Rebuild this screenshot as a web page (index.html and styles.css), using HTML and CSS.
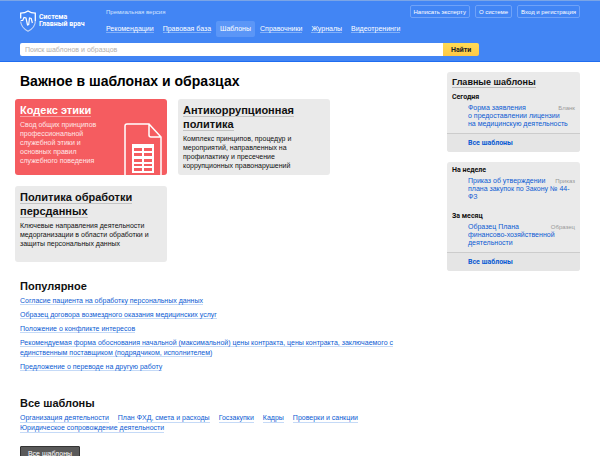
FILE: index.html
```html
<!DOCTYPE html>
<html lang="ru">
<head>
  <meta charset="UTF-8">
  <title>Шаблоны — Система Главный врач</title>
  <link rel="stylesheet" href="styles.css">
</head>
<body>
  <header class="header">
    <div class="header-top">
      <a class="logo" href="#">
        <svg width="16" height="22" viewBox="0 0 16 22" fill="none" stroke="#fff">
          <path d="M.7 8.500V3.200C3.500 3.200 6 2.500 8 1c2 1.500 4.500 2.200 7.300 2.200v8" stroke-width="1.300"/>
          <path d="M.7 11.500c.2 4.500 3.300 7.500 7.300 9.700 4.200-2.200 7.300-5.400 7.300-10" stroke-width="1.100" stroke="#c3d5f5"/>
          <path d="M.7 10.500h2L4 7.500l2 .5 1.500 7 1.200-.5L9.500 8l1.700.5 1.200 4.500" stroke-width="1.200"/>
        </svg>
        <span>Система<br>Главный врач</span>
      </a>
      <div class="header-middle">
        <div class="version">Премиальная версия</div>
        <nav class="nav">
          <a href="#"><span>Рекомендации</span></a>
          <a href="#"><span>Правовая база</span></a>
          <a class="active" href="#"><span>Шаблоны</span></a>
          <a href="#"><span>Справочники</span></a>
          <a href="#"><span>Журналы</span></a>
          <a href="#"><span>Видеотренинги</span></a>
        </nav>
      </div>
      <div class="user-buttons">
        <button type="button">Написать эксперту</button>
        <button type="button">О системе</button>
        <button type="button">Вход и регистрация</button>
      </div>
    </div>
    <form class="search">
      <input type="text" aria-label="Поиск" placeholder="Поиск шаблонов и образцов">
      <button type="button">Найти</button>
    </form>
  </header>

  <div class="page">
    <main class="content">
      <h1>Важное в шаблонах и образцах</h1>
      <div class="cards">
        <section class="card card-red">
          <h2><a href="#">Кодекс этики</a></h2>
          <p>Свод общих принципов профессиональной служебной этики и основных правил служебного поведения</p>
          <svg class="doc" width="40" height="52" viewBox="0 0 40 52" fill="none" stroke="#fff" stroke-width="1.500">
            <path d="M2 52V3q0-2 2-2h22l12 13v38M26 1v11q0 2 2 2h10"/>
            <path d="M9 21h22v29H9z" fill="#fff" stroke="none"/>
            <path d="M11 25h8v3h-8zM21 25h8v3h-8zM11 30h8v3h-8zM21 30h8v3h-8zM11 36h8v3h-8zM21 36h8v3h-8zM11 41h8v2h-8zM21 41h8v2h-8zM11 45h8v3h-8zM21 45h8v3h-8z" fill="#f55c60" stroke="none"/>
          </svg>
        </section>
        <section class="card">
          <h2><a href="#">Антикоррупционная политика</a></h2>
          <p>Комплекс принципов, процедур и мероприятий, направленных на профилактику и пресечение коррупционных правонарушений</p>
        </section>
        <section class="card">
          <h2><a href="#">Политика обработки персданных</a></h2>
          <p>Ключевые направления деятельности медорганизации в области обработки и защиты персональных данных</p>
        </section>
      </div>

      <h2 class="title">Популярное</h2>
      <ul class="popular">
        <li><a href="#">Согласие пациента на обработку персональных данных</a></li>
        <li><a href="#">Образец договора возмездного оказания медицинских услуг</a></li>
        <li><a href="#">Положение о конфликте интересов</a></li>
        <li><a href="#">Рекомендуемая форма обоснования начальной (максимальной) цены контракта, цены контракта, заключаемого с единственным поставщиком (подрядчиком, исполнителем)</a></li>
        <li><a href="#">Предложение о переводе на другую работу</a></li>
      </ul>

      <h2 class="title">Все шаблоны</h2>
      <div class="topics">
        <a href="#">Организация деятельности</a>
        <a href="#">План ФХД, смета и расходы</a>
        <a href="#">Госзакупки</a>
        <a href="#">Кадры</a>
        <a href="#">Проверки и санкции</a>
        <a href="#">Юридическое сопровождение деятельности</a>
      </div>
      <button class="all-button" type="button">Все шаблоны</button>
    </main>

    <aside class="sidebar">
      <section class="box">
        <h2><a href="#">Главные шаблоны</a></h2>
        <h3>Сегодня</h3>
        <div class="item">
          <a href="#">Форма заявления <br>о предоставлении лицензии <br>на медицинскую деятельность</a>
          <span>Бланк</span>
        </div>
        <a class="more" href="#">Все шаблоны</a>
      </section>
      <section class="box">
        <h3>На неделе</h3>
        <div class="item item-spaced">
          <a href="#">Приказ об утверждении <br>плана закупок по Закону № 44-<br>ФЗ</a>
          <span>Приказ</span>
        </div>
        <h3>За месяц</h3>
        <div class="item">
          <a href="#">Образец Плана <br>финансово-хозяйственной деятельности</a>
          <span>Образец</span>
        </div>
        <a class="more" href="#">Все шаблоны</a>
      </section>
    </aside>
  </div>
</body>
</html>
```
FILE: styles.css
```css
* {
  box-sizing: border-box;
}

body {
  margin: 0;
  background: #fff;
  color: #111;
  font-family: "Liberation Sans", Arial, sans-serif;
  font-size: 7px;
  line-height: 9px;
}

h1, h2, h3, p, ul {
  margin: 0;
  padding: 0;
}

a {
  color: #0b5bd3;
  text-decoration: none;
}

button, input {
  font-family: inherit;
  border: none;
  margin: 0;
}

.header {
  padding: 4px 20px 5px;
  background: #4285f4;
  border-top: 1px solid #7ba5e6;
  border-bottom: 1px solid #1f6df0;
}

.header-top {
  display: flex;
  align-items: flex-start;
  height: 38px;
}

.logo {
  display: flex;
  flex-shrink: 0;
  align-items: center;
  gap: 3px;
  width: 82px;
  padding-top: 5px;
  color: #fff;
  font-family: Roboto, sans-serif;
  font-weight: bold;
  line-height: 7px;
  white-space: nowrap;
}

.header-middle {
  flex: 1;
  min-width: 0;
}

.version {
  padding: 2px 4px 0;
  color: #d5e4ff;
  font-size: 6px;
  line-height: 10px;
}

.nav {
  display: flex;
  gap: 1px;
  padding-top: 4px;
  white-space: nowrap;
}

.nav a {
  padding: 3px 4px 4px;
  border-radius: 2px;
  color: #fff;
}

.nav span {
  border-bottom: 1px solid #81aff8;
}

.nav .active {
  background: #5b96f7;
}

.nav .active span {
  border: none;
}

.user-buttons {
  display: flex;
  flex-shrink: 0;
  gap: 5px;
}

.user-buttons button {
  height: 13px;
  padding: 0 3px;
  background: transparent;
  border: 1px solid #6fa2f8;
  border-radius: 2px;
  color: #fff;
  font-size: 6px;
  white-space: nowrap;
}

.search {
  display: flex;
  width: 82%;
  height: 13px;
  border-radius: 2px;
  overflow: hidden;
}

.search input {
  flex: 1;
  padding: 0 5px;
  background: #fff;
  font-size: 7px;
}

.search input::placeholder {
  color: #b5b0ac;
}

.search button {
  width: 36px;
  padding: 0;
  background: linear-gradient(#ffdc55, #ffc845);
  color: #222;
  font-family: Roboto, sans-serif;
  font-size: 7px;
  font-weight: bold;
}

.page {
  display: flex;
  gap: 17px;
  padding: 10px 20px;
}

.content {
  flex: 1;
}

h1 {
  margin-bottom: 9px;
  color: #000;
  font-size: 14px;
  line-height: 18px;
}

.cards {
  display: grid;
  grid-template-columns: repeat(auto-fill, 152px);
  gap: 11px;
  margin: 0 -5px 15px;
}

.card {
  position: relative;
  min-height: 76px;
  padding: 4px 5px;
  background: #eaeaea;
  border-radius: 3px;
}

.card h2 {
  margin-bottom: 3px;
  font-size: 11px;
  line-height: 14px;
}

.card h2 a {
  color: #111;
  border-bottom: 1px solid #c4c4c4;
}

.card-red {
  background: #f55c60;
  color: #ffe6e6;
}

.card-red h2 a {
  color: #fff;
  border-color: #fa9c9f;
}

.card-red p {
  width: 90px;
}

.doc {
  position: absolute;
  right: 4px;
  bottom: 0;
}

.title {
  margin-bottom: 1px;
  color: #111;
  font-size: 11px;
  line-height: 18px;
}

.popular {
  margin-bottom: 22px;
  list-style: none;
}

.popular li {
  margin-bottom: 4px;
  line-height: 10px;
}

.popular a, .topics a {
  border-bottom: 1px solid #c5daf7;
}

.topics {
  display: flex;
  flex-wrap: wrap;
  column-gap: 9px;
}

.all-button {
  width: 60px;
  height: 14px;
  margin-top: 13px;
  padding: 0;
  background: #5a5a5a;
  border: 1px solid #333;
  border-radius: 1px;
  color: #fff;
  font-size: 7px;
}

.sidebar {
  width: 133px;
  line-height: 8px;
}

.box {
  margin-bottom: 10px;
  padding-top: 4px;
  background: #eaeaea;
  border-radius: 3px;
  overflow: hidden;
}

.box h2 {
  padding: 0 5px;
  margin-bottom: 4px;
  font-size: 9px;
  line-height: 13px;
}

.box h2 a {
  color: #111;
  border-bottom: 1px solid #bbb;
}

.box h3 {
  padding: 0 5px;
  margin-bottom: 3px;
  font-family: Roboto, sans-serif;
  font-size: 7px;
  line-height: 8px;
}

.item {
  position: relative;
  padding: 0 5px 5px 21px;
}

.item-spaced {
  padding-bottom: 11px;
}

.item span {
  position: absolute;
  top: 0;
  right: 5px;
  color: #999;
  font-size: 6px;
}

.more {
  display: block;
  padding: 5px 21px;
  background: #e5e5e5;
  border-top: 1px solid #ccc;
  font-family: Roboto, sans-serif;
  font-weight: bold;
}
```
